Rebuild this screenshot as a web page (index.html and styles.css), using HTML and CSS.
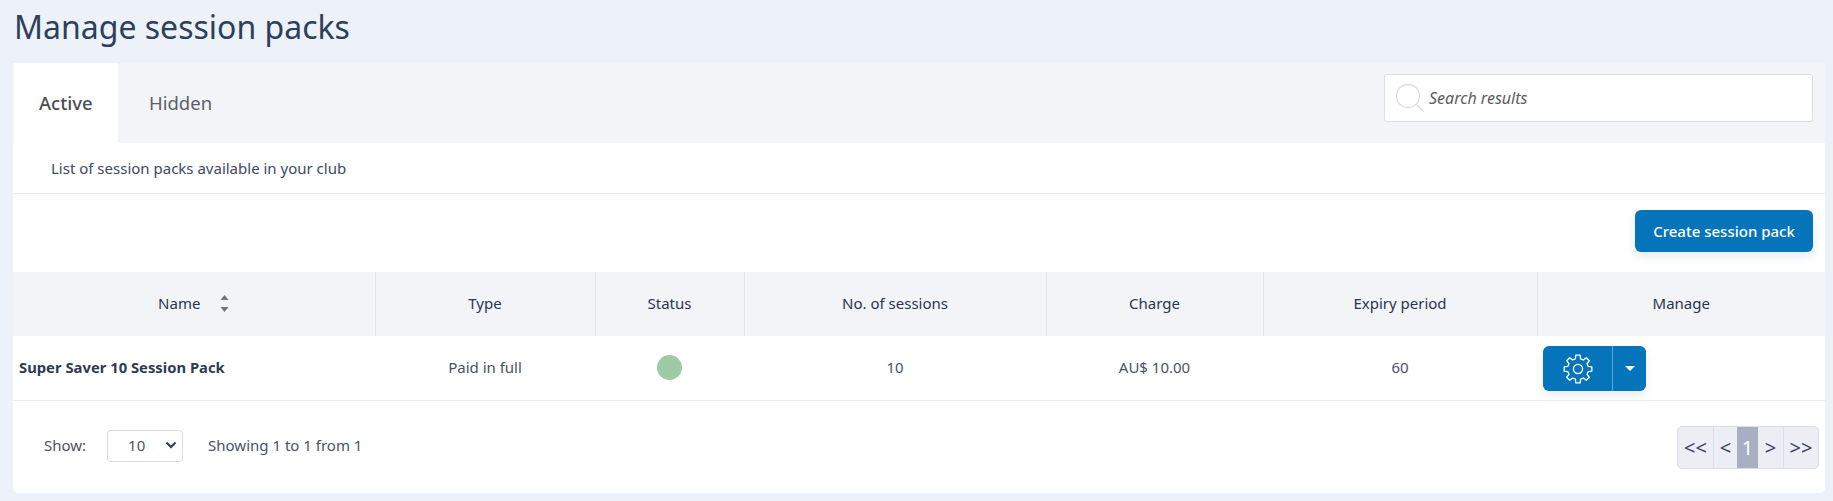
FILE: index.html
```html
<!DOCTYPE html>
<html lang="en">
<head>
<meta charset="utf-8">
<title>Manage session packs</title>
<link rel="stylesheet" href="styles.css">
</head>
<body>
<h1 class="page-title">Manage session packs</h1>
<main class="card">
  <div class="tabbar">
    <div class="tabs">
      <a class="tab tab-active">Active</a>
      <a class="tab tab-plain">Hidden</a>
    </div>
    <label class="search">
      <svg class="search-icon" width="30" height="30" viewBox="0 0 30 30" fill="none" stroke="#dcdcdc" stroke-width="1.3"><circle cx="13" cy="13" r="11.5"/><path d="M21 21l8 8"/></svg>
      <span class="search-text">Search results</span>
    </label>
  </div>
  <p class="desc">List of session packs available in your club</p>
  <div class="actions"><button class="btn-primary">Create session pack</button></div>
  <table class="grid">
    <colgroup>
      <col class="c1"><col class="c2"><col class="c3"><col class="c4"><col class="c5"><col class="c6"><col class="c7">
    </colgroup>
    <thead>
      <tr>
        <th><span class="name-head">Name<svg class="sort" width="9" height="17" viewBox="0 0 9 17" fill="#6d7486"><path d="M4.5 0L8.5 5H.5z"/><path d="M4.5 17L.5 12H8.5z"/></svg></span></th>
        <th>Type</th><th>Status</th><th>No. of sessions</th><th>Charge</th><th>Expiry period</th><th>Manage</th>
      </tr>
    </thead>
    <tbody>
      <tr>
        <td class="name">Super Saver 10 Session Pack</td>
        <td>Paid in full</td>
        <td><span class="dot"></span></td>
        <td>10</td>
        <td>AU$ 10.00</td>
        <td>60</td>
        <td class="manage">
          <div class="split">
            <span class="split-main">
              <svg width="30" height="30" viewBox="-15 -15 30 30" fill="none" stroke="#fff" stroke-width="1.3" stroke-linejoin="round"><polygon points="10.19,-2.54 13.83,-2.19 13.83,2.19 10.19,2.54 9,5.41 11.33,8.23 8.23,11.33 5.41,9 2.54,10.19 2.19,13.83 -2.19,13.83 -2.54,10.19 -5.41,9 -8.23,11.33 -11.33,8.23 -9,5.41 -10.19,2.54 -13.83,2.19 -13.83,-2.19 -10.19,-2.54 -9,-5.41 -11.33,-8.23 -8.23,-11.33 -5.41,-9 -2.54,-10.19 -2.19,-13.83 2.19,-13.83 2.54,-10.19 5.41,-9 8.23,-11.33 11.33,-8.23 9,-5.41"/><circle r="4.6"/></svg>
            </span>
            <span class="split-caret"><i class="caret"></i></span>
          </div>
        </td>
      </tr>
    </tbody>
  </table>
  <div class="footer">
    <div class="show">
      <span>Show:</span>
      <span class="select"><span class="select-val">10</span><svg width="12" height="8" viewBox="0 0 12 8" fill="none" stroke="#2d3a52" stroke-width="2"><path d="M1.5 1.5L6 6l4.5-4.5"/></svg></span>
      <span>Showing 1 to 1 from 1</span>
    </div>
    <nav class="pager">
      <a class="pg pg-first">&lt;&lt;</a>
      <a class="pg pg-prev">&lt;</a>
      <a class="pg pg-cur">1</a>
      <a class="pg pg-next">&gt;</a>
      <a class="pg pg-last">&gt;&gt;</a>
    </nav>
  </div>
</main>
</body>
</html>
```
FILE: styles.css
```css
* { box-sizing: border-box; }
html, body { margin: 0; }
body {
  height: 501px;
  overflow: hidden;
  padding: 0 8px 0 13px;
  background: #edf2f9;
  font-family: "Noto Sans", "Open Sans", sans-serif;
  font-size: 15px;
  color: #2f3b54;
}
.page-title {
  margin: 0;
  height: 63px;
  padding: 5px 0 0 1px;
  font-size: 32px;
  line-height: 44px;
  font-weight: 400;
  color: #2e3f5c;
}
.card {
  height: 430px;
  background: #fff;
  border-radius: 0 0 5px 5px;
}
.tabbar {
  display: flex;
  justify-content: space-between;
  height: 80px;
  padding: 11px 12px 0 1px;
  background: #f2f4f8;
}
.tabs { display: flex; margin-top: -11px; }
.tab {
  display: flex;
  align-items: center;
  height: 80px;
  padding-bottom: 2px;
  font-size: 18.5px;
  color: #5a5f68;
}
.tab-active { width: 104px; padding-left: 25px; background: #fff; font-weight: 500; color: #4a4d52; }
.tab-plain { padding-left: 31px; }
.search {
  display: flex;
  align-items: center;
  gap: 4px;
  width: 429px;
  height: 48px;
  padding: 0 10px;
  background: #fff;
  border: 1px solid #dcdfe5;
  border-radius: 3px;
}
.search-text { font-style: italic; font-size: 16px; color: #5c5c5c; }
.desc {
  margin: 0;
  height: 51px;
  padding-left: 38px;
  line-height: 50px;
  font-size: 15px;
  color: #3e4860;
  border-bottom: 1px solid #e9ecf0;
}
.actions {
  display: flex;
  justify-content: flex-end;
  height: 78px;
  padding: 16px 12px 0 0;
}
.btn-primary {
  width: 178px;
  height: 42px;
  padding: 0;
  border: 0;
  border-radius: 6px;
  background: #0574bb;
  color: #fff;
  font: 500 15px "Noto Sans", sans-serif;
  box-shadow: 0 4px 10px rgba(30, 60, 110, .12);
}
.grid { width: 100%; border-collapse: collapse; table-layout: fixed; }
.c1 { width: 362px; }
.c2 { width: 220px; }
.c3 { width: 149px; }
.c4 { width: 302px; }
.c5 { width: 217px; }
.c6 { width: 274px; }
th {
  height: 64px;
  padding: 0 0 2px;
  background: #f2f4f8;
  border-left: 1px solid #e2e5eb;
  font-weight: 400;
  font-size: 15px;
  color: #2a3550;
}
th:first-child { border-left: 0; }
td {
  height: 64px;
  padding: 0 0 2px;
  text-align: center;
  font-size: 15px;
  color: #4a5264;
  border-bottom: 1px solid #e9ecf0;
}
td.name { text-align: left; padding-left: 6px; font-size: 14.8px; font-weight: 700; color: #2f3b54; }
.name-head { display: inline-flex; align-items: center; gap: 20px; }
.dot {
  display: block;
  width: 25px;
  height: 25px;
  margin: 2px auto 0;
  border-radius: 50%;
  background: #9dcba6;
}
td.manage { padding-left: 6px; padding-bottom: 0; }
.split {
  display: flex;
  width: 103px;
  height: 45px;
  margin-top: 2px;
  border-radius: 6px;
  background: #0574bb;
  box-shadow: 0 4px 10px rgba(30, 60, 110, .1);
}
.split-main {
  display: flex;
  align-items: center;
  justify-content: center;
  width: 70px;
  border-right: 1px solid #5ea6d6;
}
.split-caret { flex: 1; display: flex; align-items: center; justify-content: center; }
.caret {
  width: 0;
  height: 0;
  border: 5px solid transparent;
  border-top: 5px solid #fff;
  border-bottom: 0;
}
.footer {
  display: flex;
  justify-content: space-between;
  padding: 25px 6px 0 31px;
}
.show { display: flex; align-items: center; height: 32px; margin-top: 4px; padding-bottom: 2px; color: #4a5264; }
.select {
  display: flex;
  align-items: center;
  justify-content: space-between;
  width: 76px;
  height: 32px;
  margin: 2px 25px 0 21px;
  padding: 0 5px 2px 20px;
  border: 1px solid #d9dce3;
  border-radius: 4px;
}
.pager {
  display: flex;
  height: 43px;
  border: 1px solid #dcdfe7;
  border-radius: 5px;
  background: #eceef4;
  overflow: hidden;
}
.pg {
  display: flex;
  align-items: center;
  justify-content: center;
  font-size: 20px;
  color: #3a4560;
  border-left: 1px solid #dcdfe7;
}
.pg-first { width: 35px; border-left: 0; }
.pg-prev { width: 24px; }
.pg-cur { width: 21px; background: #a9afc2; color: #fff; border-left: 0; }
.pg-next { width: 25px; border-left: 0; }
.pg-last { width: 35px; }
```
